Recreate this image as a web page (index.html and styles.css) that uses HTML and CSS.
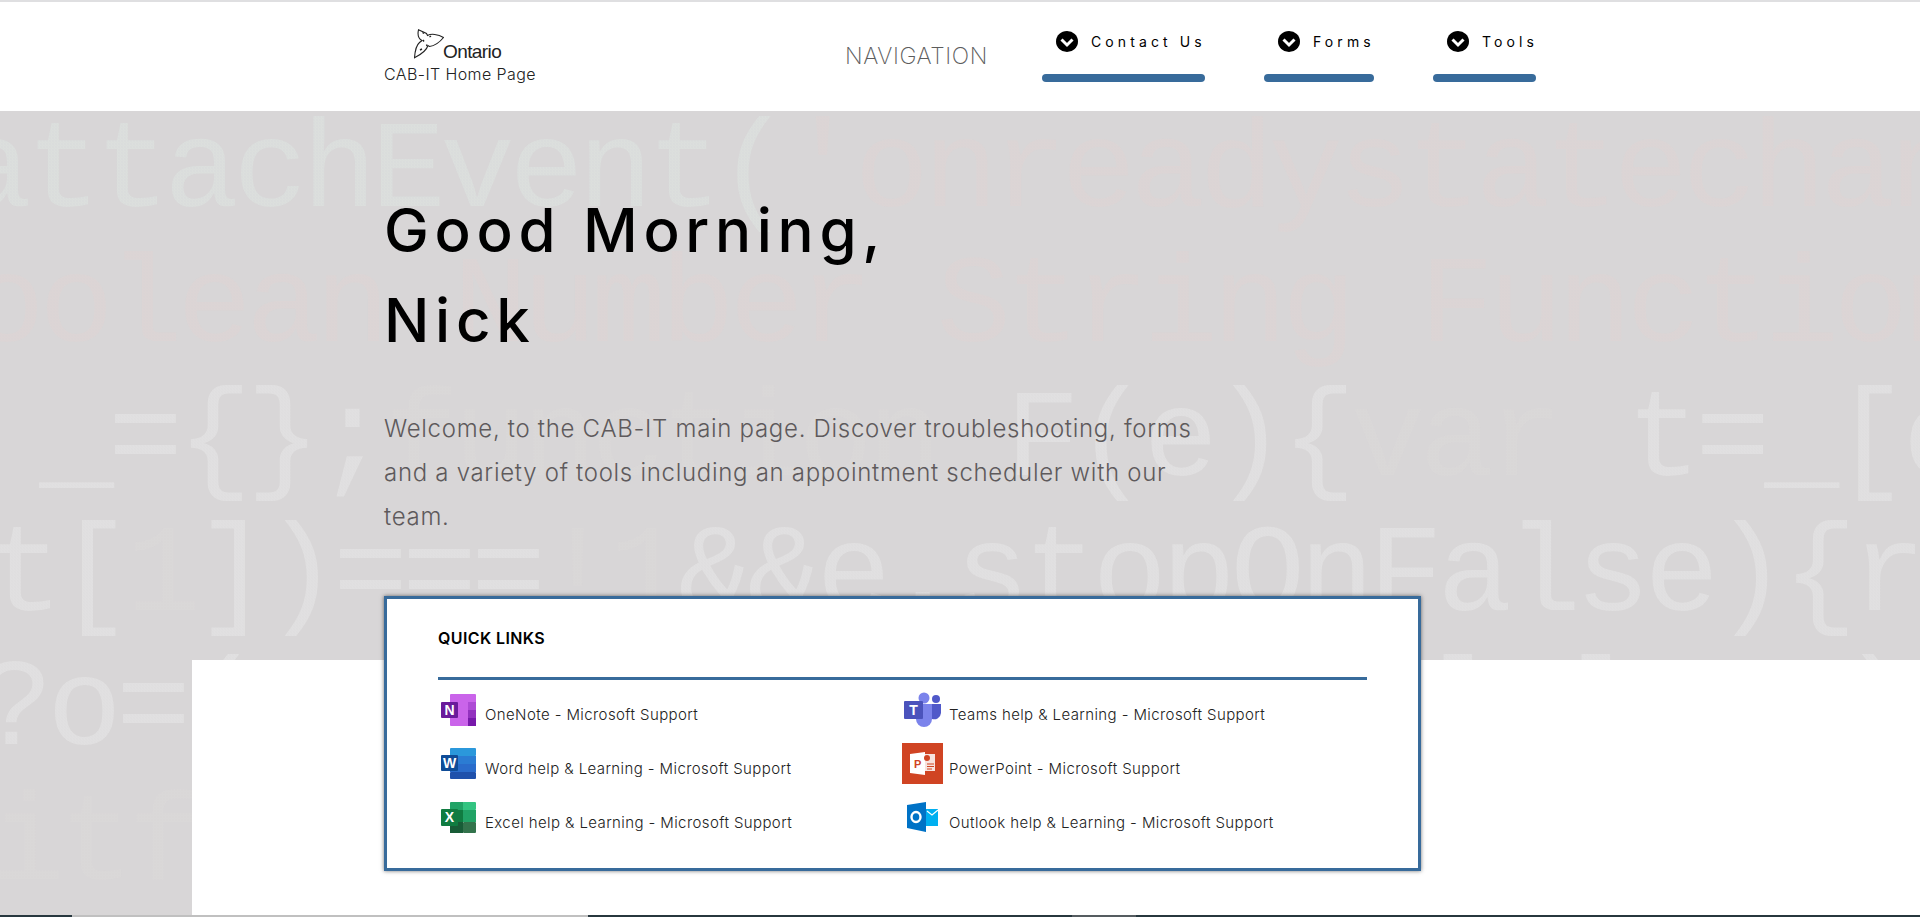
FILE: index.html
```html
<!DOCTYPE html>
<html lang="en">
<head>
<meta charset="utf-8">
<title>CAB-IT Home Page</title>
<link rel="stylesheet" href="styles.css">
</head>
<body>
<header class="topbar">
  <a class="brand" href="#">
    <span class="logo">
      <svg class="trillium" viewBox="0 0 30 30" width="30" height="30" aria-hidden="true">
        <path d="M4.500 .8L12.500 4.500 13.500 6.500C17 4.500 24 5 29.500 8.500 25 14 20 17 15.500 17.500L14 16.500C12.500 21.500 6 26 .5 28.800 1 22 2.500 16 5.500 13.500L8 11.500C4.500 9.500 3.500 5 4.500 .8Z" fill="none" stroke="#222" stroke-width="1.100"/>
        <path d="M8.500 3.500l1.500 1M17 7l-1.500 1M6 21l2-1M13 17l-.5-1.500M9 11l1 1.500" stroke="#222" stroke-width="1.400" fill="none"/>
      </svg>
      <span class="logo-word">Ontario</span>
    </span>
    <span class="brand-caption">CAB-IT Home Page</span>
  </a>
  <nav class="nav">
    <span class="nav-title">NAVIGATION</span>
    <a class="nav-item w-contact" href="#">
      <span class="nav-label">
        <svg class="chev" viewBox="0 0 22 21" width="22" height="21" aria-hidden="true"><ellipse cx="11" cy="10.500" rx="11" ry="10.500"/><path d="M5.500 8.500l5.500 5.500 5.500-5.500" fill="none" stroke="#fff" stroke-width="3"/></svg>
        <span class="nav-text">Contact Us</span>
      </span>
      <span class="nav-bar"></span>
    </a>
    <a class="nav-item w-forms" href="#">
      <span class="nav-label">
        <svg class="chev" viewBox="0 0 22 21" width="22" height="21" aria-hidden="true"><ellipse cx="11" cy="10.500" rx="11" ry="10.500"/><path d="M5.500 8.500l5.500 5.500 5.500-5.500" fill="none" stroke="#fff" stroke-width="3"/></svg>
        <span class="nav-text">Forms</span>
      </span>
      <span class="nav-bar"></span>
    </a>
    <a class="nav-item w-tools" href="#">
      <span class="nav-label">
        <svg class="chev" viewBox="0 0 22 21" width="22" height="21" aria-hidden="true"><ellipse cx="11" cy="10.500" rx="11" ry="10.500"/><path d="M5.500 8.500l5.500 5.500 5.500-5.500" fill="none" stroke="#fff" stroke-width="3"/></svg>
        <span class="nav-text">Tools</span>
      </span>
      <span class="nav-bar"></span>
    </a>
  </nav>
</header>

<main class="stage">
  <div class="code" aria-hidden="true">
    <div class="code-line l1"><span class="green">attachEvent(</span><span class="pink">'onreadystatechange'</span></div>
    <div class="code-line l2"><span class="pink">Boolean Number String Function</span></div>
    <div class="code-line l3"><span class="pale">_={};</span><span class="faint">function </span><span class="pale">F(e){</span><span class="faint">var </span><span class="pale">t=_[e</span></div>
    <div class="code-line l4"><span class="pale">t[</span><span class="faint">1</span><span class="pale">])===</span><span class="faint">!1</span><span class="pale">&amp;&amp;e.stopOnFalse){r</span></div>
    <div class="code-line l5"><span class="pale">?o=(r.apply(e,t||[]),l?l:!1)</span></div>
    <div class="code-line l6"><span class="faint">itf</span></div>
  </div>

  <section class="hero">
    <h1 class="greeting">Good Morning,<br>Nick</h1>
    <p class="intro">Welcome, to the CAB-IT main page. Discover troubleshooting, forms<br>and a variety of tools including an appointment scheduler with our<br>team.</p>

    <div class="card">
      <h2 class="card-title">QUICK LINKS</h2>
      <div class="links">
        <a class="link" href="#">
          <svg class="app" viewBox="0 0 47 54" width="47" height="54" aria-hidden="true">
            <rect x="12" y="11" width="26" height="32" rx="1" fill="#ca64ea"/>
            <rect x="30" y="19" width="8" height="8" fill="#ae4bd5"/>
            <rect x="30" y="27" width="8" height="8" fill="#9332bf"/>
            <rect x="30" y="35" width="8" height="8" fill="#7719aa"/>
            <rect x="3" y="19" width="17" height="16" rx="1" fill="#6a1b9a"/>
            <text class="app-letter" x="11.500" y="32">N</text>
          </svg>
          <span class="link-text">OneNote - Microsoft Support</span>
        </a>
        <a class="link" href="#">
          <svg class="app" viewBox="0 0 47 54" width="47" height="54" aria-hidden="true">
            <circle cx="22" cy="15" r="5.500" fill="#7b83eb"/>
            <circle cx="34" cy="16" r="4" fill="#5059c9"/>
            <path d="M30 21h9v9a7 7 0 0 1-9 6z" fill="#5059c9"/>
            <path d="M14 21h16v15a8 8 0 0 1-16 0z" fill="#7b83eb"/>
            <rect x="2" y="18" width="19" height="18" rx="1" fill="#4b53bc"/>
            <text class="app-letter" x="11.500" y="32">T</text>
          </svg>
          <span class="link-text">Teams help &amp; Learning - Microsoft Support</span>
        </a>
        <a class="link" href="#">
          <svg class="app" viewBox="0 0 47 54" width="47" height="54" aria-hidden="true">
            <rect x="12" y="11" width="26" height="8" rx="1" fill="#2b98db"/>
            <rect x="12" y="19" width="26" height="8" fill="#2b7cd3"/>
            <rect x="12" y="27" width="26" height="8" fill="#2a6ccb"/>
            <rect x="12" y="35" width="26" height="7" rx="1" fill="#1f51ab"/>
            <rect x="3" y="18" width="17" height="16" rx="1" fill="#0f4c97"/>
            <text class="app-letter" x="11.500" y="31">W</text>
          </svg>
          <span class="link-text">Word help &amp; Learning - Microsoft Support</span>
        </a>
        <a class="link" href="#">
          <svg class="app" viewBox="0 0 47 54" width="47" height="54" aria-hidden="true">
            <rect x="0" y="6" width="41" height="41" fill="#d04423"/>
            <path d="M8 17l15-2v23l-15-2z" fill="#fff"/>
            <path d="M23 17h10v17h-10z" fill="#f7e3de"/>
            <circle cx="25" cy="21" r="3" fill="#d04423"/>
            <path d="M25 27h7M25 29.500h7M25 32h5" stroke="#d04423" stroke-width="1"/>
            <text class="ppt-letter" x="12" y="31">P</text>
          </svg>
          <span class="link-text">PowerPoint - Microsoft Support</span>
        </a>
        <a class="link" href="#">
          <svg class="app" viewBox="0 0 47 54" width="47" height="54" aria-hidden="true">
            <rect x="12" y="11" width="14" height="8" rx="1" fill="#21a366"/>
            <rect x="25" y="11" width="13" height="8" rx="1" fill="#33c481"/>
            <rect x="12" y="19" width="13" height="12" fill="#107c41"/>
            <rect x="25" y="19" width="13" height="12" fill="#21a366"/>
            <rect x="12" y="31" width="13" height="11" fill="#185c37"/>
            <rect x="25" y="31" width="13" height="11" rx="1" fill="#33734c"/>
            <rect x="3" y="18" width="17" height="17" rx="1" fill="#107c41"/>
            <text class="app-letter" x="11.500" y="31">X</text>
          </svg>
          <span class="link-text">Excel help &amp; Learning - Microsoft Support</span>
        </a>
        <a class="link" href="#">
          <svg class="app" viewBox="0 0 47 54" width="47" height="54" aria-hidden="true">
            <path d="M24 18h12v17H24z" fill="#00aff0"/>
            <path d="M25 20l5 4 6-5" fill="none" stroke="#fff" stroke-width="1.200"/>
            <path d="M5 14L24 11v30L5 37z" fill="#0072c6"/>
            <ellipse cx="14" cy="26" rx="4.500" ry="5" fill="none" stroke="#fff" stroke-width="2.400"/>
          </svg>
          <span class="link-text">Outlook help &amp; Learning - Microsoft Support</span>
        </a>
      </div>
    </div>
  </section>

  <section class="lower"></section>
</main>

<footer class="strip">
  <span class="seg dark s1"></span>
  <span class="seg light s2"></span>
  <span class="seg dark s3"></span>
  <span class="seg mid s4"></span>
  <span class="seg dark s5"></span>
</footer>
</body>
</html>
```

FILE: styles.css
```css
* { box-sizing: border-box; }

html, body {
  margin: 0;
  padding: 0;
  height: 917px;
  overflow: hidden;
  background: #fff;
  font-family: "Inter", "Noto Sans", sans-serif;
  color: #000;
}

a { color: inherit; text-decoration: none; }

/* header */
.topbar {
  display: flex;
  height: 111px;
  padding-left: 384px;
  background: #fff;
  border-top: 2px solid #dfdfe1;
}

.brand {
  display: flex;
  flex-direction: column;
  width: 151px;
  padding-top: 27px;
}

.logo {
  display: flex;
  align-items: flex-end;
  padding-left: 30px;
  height: 30px;
}

.logo-word {
  font-family: "Liberation Sans", sans-serif;
  font-size: 19px;
  letter-spacing: -.6px;
  line-height: 19px;
  margin: 0 0 -2px -1px;
  color: #222;
}

.brand-caption {
  margin-top: 4px;
  font-size: 16px;
  font-weight: 300;
  line-height: 22px;
  letter-spacing: .4px;
  white-space: nowrap;
  color: #222;
}

.nav {
  display: flex;
  align-items: flex-start;
  margin-left: 310px;
}

.nav-title {
  width: 143px;
  margin-top: 40px;
  margin-right: 54px;
  font-size: 23px;
  font-weight: 250;
  line-height: 28px;
  letter-spacing: .6px;
  color: #5c5c5c;
  white-space: nowrap;
}

.nav-item {
  display: flex;
  flex-direction: column;
  justify-content: space-between;
  height: 80px;
  margin-right: 59px;
  padding-top: 28px;
}

.w-contact { width: 163px; }
.w-forms { width: 110px; }
.w-tools { width: 103px; }

.nav-label {
  display: flex;
  align-items: center;
  gap: 13px;
  padding-left: 14px;
}

.nav-bar {
  display: block;
  height: 8px;
  border-radius: 4px;
  background: #386b9b;
}

.chev { flex: none; fill: #000; }

.nav-text {
  padding-top: 1px;
  font-size: 14px;
  font-weight: 400;
  letter-spacing: 4.100px;
  line-height: 21px;
  white-space: nowrap;
}

/* stage */
.stage {
  position: relative;
  height: 804px;
  background: #d8d6d7;
  overflow: hidden;
}

.code {
  position: absolute;
  top: -5px;
  right: 0;
  bottom: 0;
  left: 0;
  overflow: hidden;
  font-family: "Liberation Mono", monospace;
  font-size: 125px;
  line-height: 134.500px;
  letter-spacing: -6px;
}

.code-line {
  height: 134.500px;
  white-space: pre;
}

.code-line span {
  -webkit-background-clip: text;
  background-clip: text;
  color: transparent;
  background-size: 3px 3px;
}

.green { background-image: radial-gradient(circle, rgba(222,230,226,.5) 60%, rgba(222,230,226,.15) 100%); }
.pale { background-image: radial-gradient(circle, rgba(232,232,232,.55) 60%, rgba(232,232,232,.2) 100%); }
.pink { background-image: radial-gradient(circle, rgba(226,212,210,.38) 60%, rgba(226,212,210,.1) 100%); }
.faint { background-image: radial-gradient(circle, rgba(226,222,222,.22) 60%, rgba(226,222,222,.06) 100%); }

.l1 { margin-left: -43px; }
.l2 { margin-left: -99px; }
.l3 { margin-left: 39px; }
.l4 { margin-left: -12px; }
.l5 { margin-left: -22px; }
.l6 { margin-left: -10px; }

.hero {
  position: relative;
  z-index: 2;
  height: 549px;
  padding: 74px 0 0 384px;
}

.greeting {
  margin: 0;
  font-size: 60px;
  font-weight: 500;
  line-height: 90px;
  letter-spacing: 5.700px;
}

.intro {
  margin: 42px 0 0;
  font-size: 24px;
  font-weight: 350;
  line-height: 44px;
  letter-spacing: .7px;
  color: #5e5a5c;
  white-space: nowrap;
}

.card {
  position: relative;
  width: 1037px;
  height: 275px;
  margin-top: 57px;
  padding: 0 51px;
  background: #fff;
  border: 3px solid #386b9b;
  box-shadow: 0 0 4px rgba(0,0,0,.55);
}

.card-title {
  margin: 0;
  height: 81px;
  padding-top: 27px;
  font-size: 16px;
  font-weight: 600;
  line-height: 24px;
  letter-spacing: .4px;
  border-bottom: 3px solid #386b9b;
}

.links {
  display: grid;
  grid-template-columns: 464px 1fr;
  grid-auto-rows: 54px;
  margin-top: 3px;
}

.link {
  display: flex;
  align-items: center;
}

.app { flex: none; }

.app-letter {
  font-family: "Liberation Sans", sans-serif;
  font-size: 14px;
  font-weight: 700;
  fill: #fff;
  text-anchor: middle;
}

.ppt-letter {
  font-family: "Liberation Sans", sans-serif;
  font-size: 11px;
  font-weight: 700;
  fill: #d04423;
}

.link-text {
  padding-top: 10px;
  font-size: 15px;
  font-weight: 300;
  line-height: 22px;
  letter-spacing: .4px;
  color: #222;
  white-space: nowrap;
}

.lower {
  position: relative;
  z-index: 1;
  height: 255px;
  margin-left: 192px;
  background: #fff;
}

/* bottom edge */
.strip {
  display: flex;
  height: 2px;
}

.seg { display: block; height: 2px; }
.dark { background: #27373e; }
.light { background: #c0c0c0; }
.mid { background: #555c60; }
.s1 { width: 72px; }
.s2 { width: 516px; }
.s3 { width: 484px; }
.s4 { width: 64px; }
.s5 { flex: 1; }
```
